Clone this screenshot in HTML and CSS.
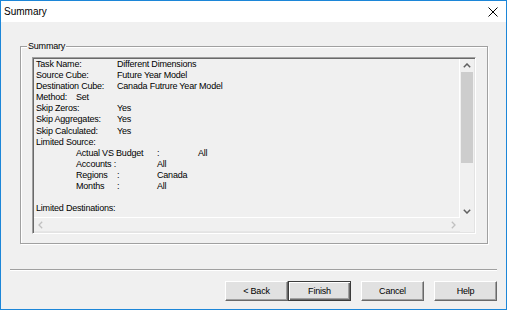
FILE: index.html
```html
<!DOCTYPE html>
<html>
<head>
<meta charset="utf-8">
<link rel="stylesheet" href="styles.css">
</head>
<body>
<div class="window">
  <div class="titlebar">
    <span class="title">Summary</span>
    <svg class="close" width="10" height="10" viewBox="0 0 10 10"><path d="M0.5 0.5L9.5 9.5M9.5 0.5L0.5 9.5" stroke="#000" stroke-width="1" fill="none"/></svg>
  </div>
  <div class="client">
    <div class="group">
      <span class="group-label">Summary</span>
      <div class="listbox">
        <div class="text">
          <div class="row"><span class="w81">Task Name:</span>Different Dimensions</div>
          <div class="row"><span class="w81">Source Cube:</span>Future Year Model</div>
          <div class="row"><span class="w81">Destination Cube:</span>Canada Futrure Year Model</div>
          <div class="row"><span class="w40">Method:</span>Set</div>
          <div class="row"><span class="w81">Skip Zeros:</span>Yes</div>
          <div class="row"><span class="w81">Skip Aggregates:</span>Yes</div>
          <div class="row"><span class="w81">Skip Calculated:</span>Yes</div>
          <div class="row">Limited Source:</div>
          <div class="row indent"><span class="w81">Actual VS Budget</span><span class="w41">:</span>All</div>
          <div class="row indent"><span class="w81">Accounts :</span>All</div>
          <div class="row indent"><span class="w41">Regions</span><span class="w40">:</span>Canada</div>
          <div class="row indent"><span class="w41">Months</span><span class="w40">:</span>All</div>
          <div class="row">&nbsp;</div>
          <div class="row">Limited Destinations:</div>
        </div>
        <div class="vscroll">
          <div class="sbtn"><svg width="8" height="5" viewBox="0 0 8 5"><path d="M0.8 4.2L4 1L7.2 4.2" stroke="#606060" stroke-width="1.5" fill="none"/></svg></div>
          <div class="thumb"></div>
          <div class="track"></div>
          <div class="sbtn"><svg width="8" height="5" viewBox="0 0 8 5"><path d="M0.8 0.8L4 4L7.2 0.8" stroke="#606060" stroke-width="1.5" fill="none"/></svg></div>
        </div>
        <div class="hscroll">
          <div class="hbtn"><svg width="5" height="8" viewBox="0 0 5 8"><path d="M4.2 0.8L1 4L4.2 7.2" stroke="#c0c0c0" stroke-width="1.3" fill="none"/></svg></div>
          <div class="htrack"></div>
          <div class="hbtn"><svg width="5" height="8" viewBox="0 0 5 8"><path d="M0.8 0.8L4 4L0.8 7.2" stroke="#c0c0c0" stroke-width="1.3" fill="none"/></svg></div>
        </div>
        <div class="corner"></div>
      </div>
    </div>
    <div class="separator"></div>
    <div class="buttons">
      <button class="btn">&lt; Back</button>
      <button class="btn default">Finish</button>
      <button class="btn gap">Cancel</button>
      <button class="btn gap">Help</button>
    </div>
  </div>
</div>
</body>
</html>
```
FILE: styles.css
```css
html, body {
  margin: 0;
  padding: 0;
  background: #f0f0f0;
}
body {
  width: 507px;
  height: 310px;
  overflow: hidden;
}
.window {
  box-sizing: border-box;
  width: 507px;
  height: 310px;
  border: 1px solid #1c86d8;
  display: flex;
  flex-direction: column;
  background: #f0f0f0;
}
.titlebar {
  height: 21px;
  background: #fff;
  display: flex;
  align-items: center;
  justify-content: space-between;
  padding: 0 8px 0 3px;
  flex: none;
}
.title {
  font-family: "Liberation Sans", Arial, sans-serif;
  font-size: 10px;
  color: #000;
}
.close {
  display: block;
}
.client {
  flex: 1;
  display: flex;
  flex-direction: column;
  font-family: "Liberation Sans", Arial, sans-serif;
  font-size: 9px;
  letter-spacing: -0.2px;
  color: #000;
}
.group {
  position: relative;
  box-sizing: border-box;
  margin: 24px 0 0 19px;
  width: 468px;
  height: 198px;
  border: 1px solid #a0a0a0;
  box-shadow: inset 1px 1px 0 #fff, 1px 1px 0 #fff;
  padding: 10px 0 0 11px;
}
.group-label {
  position: absolute;
  left: 6px;
  top: -7px;
  padding: 0 1px;
  background: #f0f0f0;
  line-height: 12px;
}
.listbox {
  box-sizing: border-box;
  width: 444px;
  height: 177px;
  border-style: solid;
  border-width: 1px;
  border-color: #a0a0a0 #fff #fff #a0a0a0;
  box-shadow: inset 1px 1px 0 #696969, inset -1px -1px 0 #e3e3e3;
  padding: 1px;
  display: grid;
  grid-template-columns: 1fr 14px;
  grid-template-rows: 1fr 14px;
}
.text {
  border-right: 1px solid #fff;
  border-bottom: 1px solid #fff;
  padding: 0 0 0 2px;
  line-height: 11.1px;
  overflow: hidden;
  white-space: nowrap;
}
.row {
  display: flex;
  height: 11.1px;
}
.indent {
  padding-left: 40px;
}
.w81 { width: 81px; flex: none; }
.w40 { width: 40px; flex: none; }
.w41 { width: 41px; flex: none; }
.vscroll {
  display: flex;
  flex-direction: column;
  background: #f0f0f0;
}
.sbtn {
  height: 13px;
  display: flex;
  align-items: center;
  justify-content: center;
  flex: none;
}
.thumb {
  height: 91px;
  margin: 0 1px;
  background: #cdcdcd;
  flex: none;
}
.track {
  flex: 1;
}
.hscroll {
  display: flex;
  align-items: stretch;
  background: #f0f0f0;
  border-bottom: 1px solid #e6e6e6;
}
.hbtn {
  width: 13px;
  display: flex;
  align-items: center;
  justify-content: center;
}
.htrack {
  flex: 1;
}
.corner {
  background: #f0f0f0;
}
.separator {
  margin: 25px 0 0 9px;
  width: 487px;
  height: 1px;
  background: #a0a0a0;
  border-bottom: 1px solid #fff;
}
.buttons {
  display: flex;
  justify-content: flex-end;
  margin: 10px 9px 0 0;
}
.btn {
  box-sizing: border-box;
  width: 63px;
  height: 20px;
  margin: 0;
  padding: 0;
  font-family: "Liberation Sans", Arial, sans-serif;
  font-size: 9px;
  letter-spacing: -0.2px;
  color: #000;
  background: #e1e1e1;
  border: 1px solid;
  border-color: #fff #696969 #696969 #fff;
  box-shadow: inset -1px -1px 0 #a0a0a0;
  border-radius: 0;
}
.btn.default {
  border-color: #3c3c3c;
  box-shadow: inset 1px 1px 0 #fff, inset -1px -1px 0 #696969, inset -2px -2px 0 #a0a0a0;
}
.btn.gap {
  margin-left: 10px;
}
```
